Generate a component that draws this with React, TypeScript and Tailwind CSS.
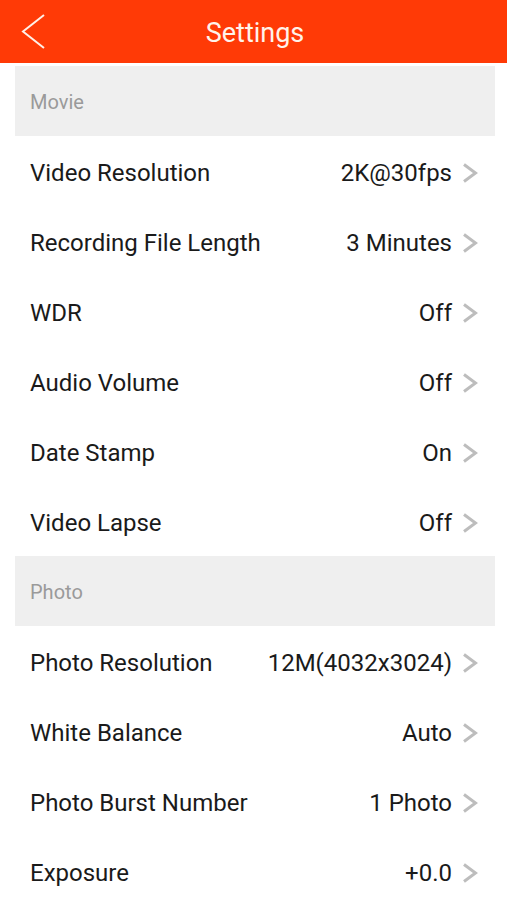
const movie = [
  ["Video Resolution", "2K@30fps"],
  ["Recording File Length", "3 Minutes"],
  ["WDR", "Off"],
  ["Audio Volume", "Off"],
  ["Date Stamp", "On"],
  ["Video Lapse", "Off"],
];

const photo = [
  ["Photo Resolution", "12M(4032x3024)"],
  ["White Balance", "Auto"],
  ["Photo Burst Number", "1 Photo"],
  ["Exposure", "+0.0"],
];

function Chevron() {
  return (
    <svg width="16" height="20" viewBox="0 0 16 20" className="ml-[10px] shrink-0">
      <path d="M2 1.5 L13.5 10 L2 18.5" fill="none" stroke="#bdbdbd" strokeWidth="3" />
    </svg>
  );
}

function Section({ title }: { title: string }) {
  return (
    <div className="ml-[15px] mr-[12px] flex h-[70px] items-center bg-[#efefef] px-[15px] pt-[2px] text-[20px] text-[#9a9a9a]">
      {title}
    </div>
  );
}

function Row({ label, value }: { label: string; value: string }) {
  return (
    <div className="flex h-[70px] items-center pl-[30px] pr-[29px] pt-[3px] text-[24px] text-[#1a1a1a]">
      <span className="flex-1">{label}</span>
      <span>{value}</span>
      <Chevron />
    </div>
  );
}

export default function App() {
  return (
    <div className="h-[900px] w-[507px] overflow-hidden bg-white font-['Roboto',sans-serif]">
      <header className="relative flex h-[63px] items-center justify-center bg-[#ff3a06] pt-[3px]">
        <svg width="26" height="36" viewBox="0 0 26 36" className="absolute left-[20px] top-[14px]">
          <path d="M24 1 L3 17.5 L24 34" fill="none" stroke="#fff0e8" strokeWidth="2" />
        </svg>
        <h1 className="pl-[3px] text-[27px] text-[#fff3ea]">Settings</h1>
      </header>
      <div className="pt-[3px]">
        <Section title="Movie" />
        {movie.map(([l, v]) => (
          <Row key={l} label={l} value={v} />
        ))}
        <Section title="Photo" />
        {photo.map(([l, v]) => (
          <Row key={l} label={l} value={v} />
        ))}
      </div>
    </div>
  );
}
